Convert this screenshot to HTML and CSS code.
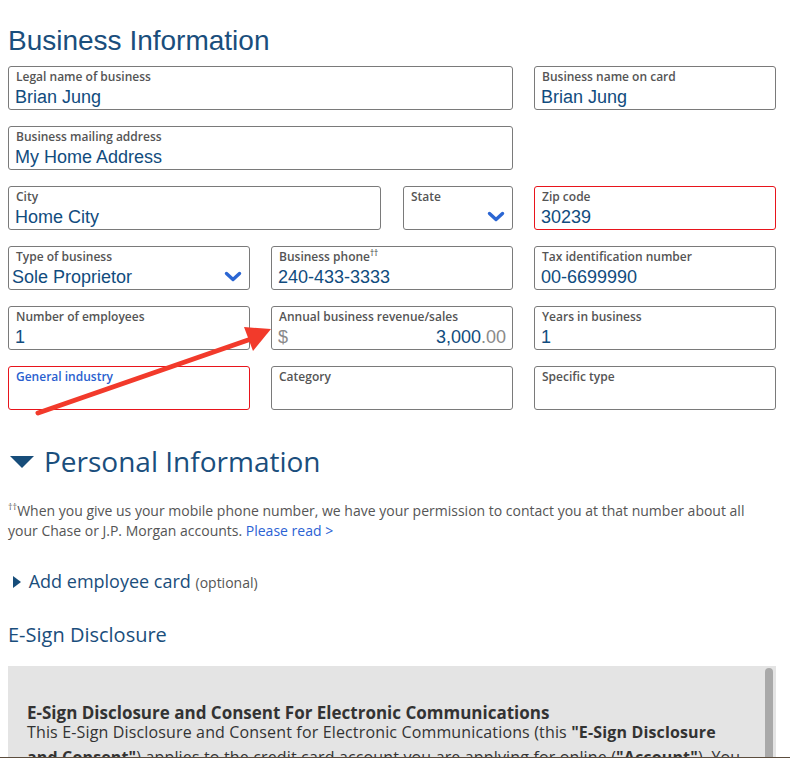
FILE: index.html
```html
<html>
    <head>
        <meta charset="utf-8" />
        <title>Business Information</title>
        <link rel="stylesheet" href="styles.css">
    </head>
    <body>
        <div class="page">
            <h1 class="title">Business Information</h1>

            <div class="form-grid">
                <div class="field span-2">
                    <div class="label">Legal name of business</div>
                    <div class="value">Brian Jung</div>
                </div>
                <div class="field">
                    <div class="label">Business name on card</div>
                    <div class="value">Brian Jung</div>
                </div>

                <div class="field span-2">
                    <div class="label">Business mailing address</div>
                    <div class="value">My Home Address</div>
                </div>
                <div></div>

                <div class="city-row span-2">
                    <div class="field city">
                        <div class="label">City</div>
                        <div class="value">Home City</div>
                    </div>
                    <div class="field state">
                        <div class="label">State</div>
                        <div class="value select-value">
                            <span></span>
                            <svg class="chevron" width="18" height="11" viewBox="0 0 18 11"><path d="M2.5 2.5 L9 8.5 L15.5 2.5" fill="none" stroke="#2b66d3" stroke-width="3.4" stroke-linecap="round" stroke-linejoin="round"/></svg>
                        </div>
                    </div>
                </div>
                <div class="field error">
                    <div class="label">Zip code</div>
                    <div class="value">30239</div>
                </div>

                <div class="field">
                    <div class="label">Type of business</div>
                    <div class="value select-value tight">
                        <span>Sole Proprietor</span>
                        <svg class="chevron" width="18" height="11" viewBox="0 0 18 11"><path d="M2.5 2.5 L9 8.5 L15.5 2.5" fill="none" stroke="#2b66d3" stroke-width="3.4" stroke-linecap="round" stroke-linejoin="round"/></svg>
                    </div>
                </div>
                <div class="field">
                    <div class="label">Business phone<sup>&dagger;&dagger;</sup></div>
                    <div class="value">240-433-3333</div>
                </div>
                <div class="field">
                    <div class="label">Tax identification number</div>
                    <div class="value">00-6699990</div>
                </div>

                <div class="field">
                    <div class="label">Number of employees</div>
                    <div class="value">1</div>
                </div>
                <div class="field">
                    <div class="label">Annual business revenue/sales</div>
                    <div class="value money">
                        <span class="muted">$</span>
                        <span>3,000<span class="muted">.00</span></span>
                    </div>
                </div>
                <div class="field">
                    <div class="label">Years in business</div>
                    <div class="value">1</div>
                </div>

                <div class="field error active">
                    <div class="label">General industry</div>
                    <div class="value"></div>
                </div>
                <div class="field">
                    <div class="label">Category</div>
                    <div class="value"></div>
                </div>
                <div class="field">
                    <div class="label">Specific type</div>
                    <div class="value"></div>
                </div>
            </div>

            <h2 class="section-title">
                <svg width="24" height="12" viewBox="0 0 24 12"><polygon points="0,0 24,0 12,12" fill="#174d7a"/></svg>
                Personal Information
            </h2>

            <p class="footnote"><sup>&dagger;&dagger;</sup>When you give us your mobile phone number, we have your permission to contact you at that number about all your Chase or J.P. Morgan accounts. <a href="#">Please read &gt;</a></p>

            <div class="toggle">
                <svg width="8" height="12" viewBox="0 0 8 12"><polygon points="0,0 8,6 0,12" fill="#174d7a"/></svg>
                <span>Add employee card</span> <small>(optional)</small>
            </div>

            <h3 class="esign-title">E-Sign Disclosure</h3>

            <div class="esign-box">
                <div class="esign-text">
                    <div class="esign-heading">E-Sign Disclosure and Consent For Electronic Communications</div>
                    <p>This E-Sign Disclosure and Consent for Electronic Communications (this <b>"E-Sign Disclosure and Consent"</b>) applies to the credit card account you are applying for online (<b>"Account"</b>). You may also be asked to review this disclosure again later.</p>
                </div>
                <div class="scrollbar"><div class="thumb"></div></div>
            </div>
            <div class="page-edge"></div>

            <svg class="arrow" width="790" height="758" viewBox="0 0 790 758">
                <line x1="38" y1="413" x2="251" y2="339" stroke="#f23a2b" stroke-width="5" stroke-linecap="round"/>
                <polygon points="271,329 244,327 253,351" fill="#f23a2b"/>
            </svg>
        </div>
    </body>
</html>
```

FILE: styles.css
```css
html, body{
    margin: 0;
    overflow: hidden;
    background-color: #fff;
}

.page{
    position: relative;
    width: 768px;
    padding: 25px 0 0 8px;
}

.title{
    margin: 0 0 9px;
    font: normal 28px/32px "Liberation Sans", Arial, sans-serif;
    color: #1a4e7c;
}

.form-grid{
    display: grid;
    grid-template-columns: repeat(3, 242px);
    grid-auto-rows: 44px;
    column-gap: 21px;
    row-gap: 16px;
}

.span-2{
    grid-column: span 2;
}

.city-row{
    display: flex;
    gap: 22px;
}

.city{
    flex: 1;
}

.state{
    width: 110px;
}

.field{
    box-sizing: border-box;
    height: 44px;
    border: 1px solid #7a7a7a;
    border-radius: 3px;
    padding-top: 2px;
}

.field.error{
    border-color: #e8141c;
}

.label{
    padding-left: 7px;
    font: 600 12px/16px "Open Sans", sans-serif;
    color: #555;
}

.label sup{
    font-size: 8px;
    line-height: 0;
}

.field.active .label{
    color: #2a5fcf;
}

.value{
    height: 22px;
    margin-top: 1px;
    padding: 0 5px 0 6px;
    font: normal 18px/22px "Liberation Sans", Arial, sans-serif;
    color: #114c7e;
}

.value.tight{
    padding-left: 3px;
}

.select-value{
    display: flex;
    justify-content: space-between;
    align-items: center;
    padding-right: 7px;
}

.chevron{
    margin-bottom: 2px;
}

.money{
    display: flex;
    justify-content: space-between;
    padding: 0 6px 0 6px;
}

.muted{
    color: #8a8a8a;
}

.section-title{
    display: flex;
    align-items: center;
    gap: 10px;
    margin: 33px 0 0 2px;
    font: normal 28px/36px "Open Sans", sans-serif;
    color: #1a4e7c;
}

.section-title svg{
    margin-top: 2px;
}

.footnote{
    margin: 22px 0 0;
    font: normal 14px/20px "Open Sans", sans-serif;
    color: #555;
}

.footnote sup{
    font-size: 9px;
    line-height: 0;
}

.footnote a{
    color: #2b62d4;
    text-decoration: none;
}

.toggle{
    margin: 28px 0 0 5px;
    font: normal 18px/24px "Open Sans", sans-serif;
    color: #1a4e7c;
}

.toggle svg{
    margin-right: 3px;
}

.toggle small{
    font-size: 14px;
    color: #555;
}

.esign-title{
    margin: 27px 0 0;
    font: normal 20px/26px "Open Sans", sans-serif;
    color: #1a4e7c;
}

.esign-box{
    display: flex;
    height: 91px;
    margin-top: 18px;
    overflow: hidden;
    background-color: #e4e4e4;
}

.esign-text{
    flex: 1;
    padding: 39px 18px 0 19px;
    font: normal 16px/25px "Open Sans", sans-serif;
    letter-spacing: 0.15px;
    color: #333;
}

.esign-heading{
    font-size: 17px;
    font-weight: bold;
    letter-spacing: 0;
    line-height: 16px;
}

.esign-text p{
    margin: -1px 0 0;
}

.scrollbar{
    width: 8px;
    padding: 2px 3px 0 0;
}

.thumb{
    height: 120px;
    border-radius: 4px;
    background-color: #a9a9a9;
}

.page-edge{
    height: 1px;
    margin-left: -8px;
    width: 790px;
    background-color: #5c4d3e;
}

.arrow{
    position: absolute;
    left: 0;
    top: 0;
    pointer-events: none;
}
```
